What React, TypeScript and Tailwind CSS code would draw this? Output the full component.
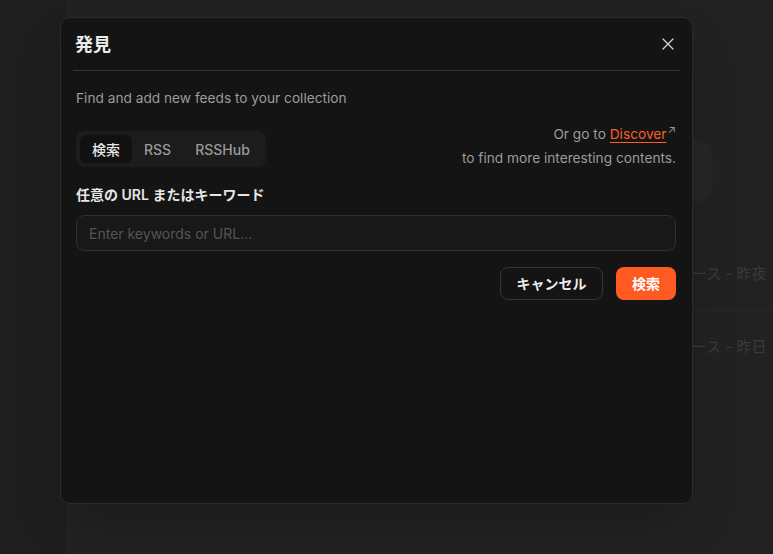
import { useState } from 'react'

const font = { fontFamily: '"Inter", "Noto Sans CJK JP", sans-serif' }

function Backdrop() {
  return (
    <div className="flex h-[554px] w-[773px] overflow-hidden bg-[#222222]">
      {/* Sidebar */}
      <aside className="w-[68px] shrink-0 border-r border-[#262626] bg-[#1e1e1e]" />

      {/* Main (dimmed behind the dialog) */}
      <main className="flex-1 pl-[592px] pt-[140px] text-[#3a3a3a]">
        <div className="h-[63px] w-[53px] rounded-2xl bg-[#262626]" />
        <div className="mt-[12px] pl-[8px] text-[11px]">記事</div>
        <div className="mt-[31px] whitespace-nowrap pl-[2px] text-[15px]">ニュース - 昨夜</div>
        <div className="mt-[25px] border-t border-[#292929]" />
        <div className="mt-[25px] whitespace-nowrap pl-[2px] text-[15px]">ニュース - 昨日</div>
      </main>
    </div>
  )
}

export default function App() {
  const [tab, setTab] = useState('search')
  const tabs = [
    { id: 'search', label: '検索' },
    { id: 'rss', label: 'RSS' },
    { id: 'rsshub', label: 'RSSHub' },
  ]

  return (
    <div className="relative" style={font}>
      <Backdrop />

      {/* Dialog */}
      <div className="absolute left-[60px] top-[17px] flex h-[487px] w-[633px] flex-col rounded-[10px] border border-[#2b2b2b] bg-[#141414] shadow-2xl">
        <div className="flex h-[52px] items-center justify-between pl-[14px] pr-4">
          <h2 className="text-[18px] font-bold text-[#ececec]">発見</h2>
          <button className="text-[#d4d4d4]" aria-label="Close">
            <svg width="16" height="16" viewBox="0 0 16 16" fill="none" stroke="currentColor" strokeWidth="1.3" strokeLinecap="round">
              <path d="M3 3l10 10M13 3L3 13" />
            </svg>
          </button>
        </div>
        <div className="mx-3 border-t border-[#333333]" />

        <div className="pl-[15px] pr-4 pt-[17px]">
          <p className="text-[13.7px] leading-5 text-[#9b9b9b]">Find and add new feeds to your collection</p>

          <div className="mt-[14px] flex items-start justify-between">
            <div className="mt-[9px] flex h-9 items-center rounded-lg bg-[#1c1c1c] p-1">
              {tabs.map(t => (
                <button
                  key={t.id}
                  onClick={() => setTab(t.id)}
                  className={
                    tab === t.id
                      ? 'h-7 rounded-md bg-[#111111] px-3 text-[14px] font-medium text-[#e8e8e8]'
                      : 'h-7 rounded-md px-3 text-[14px] font-medium text-[#9a9a9a]'
                  }
                >
                  {t.label}
                </button>
              ))}
            </div>
            <div className="text-right text-[13.7px] leading-6 text-[#9b9b9b]">
              <div>
                Or go to{' '}
                <a href="#" className="text-[#ff5c26] underline underline-offset-[3px]">Discover</a>
                <span className="ml-[1px] inline-block align-top text-[11px] leading-4">↗</span>
              </div>
              <div>to find more interesting contents.</div>
            </div>
          </div>

          <label className="mt-[15px] block text-[14px] font-semibold leading-5 text-[#e6e6e6]">
            任意の URL またはキーワード
          </label>
          <input
            className="mt-[10px] h-9 w-full rounded-lg border border-[#2f2f2f] bg-[#181818] px-3 text-[14px] text-[#e6e6e6] outline-none placeholder:text-[#555555]"
            placeholder="Enter keywords or URL..."
          />

          <div className="mt-4 flex justify-end gap-[13px]">
            <button className="h-[33px] w-[103px] rounded-lg border border-[#363636] text-[14px] font-bold text-[#ececec]">
              キャンセル
            </button>
            <button className="h-[33px] w-[60px] rounded-lg bg-[#ff5a22] text-[14px] font-bold text-white">
              検索
            </button>
          </div>
        </div>
      </div>
    </div>
  )
}
